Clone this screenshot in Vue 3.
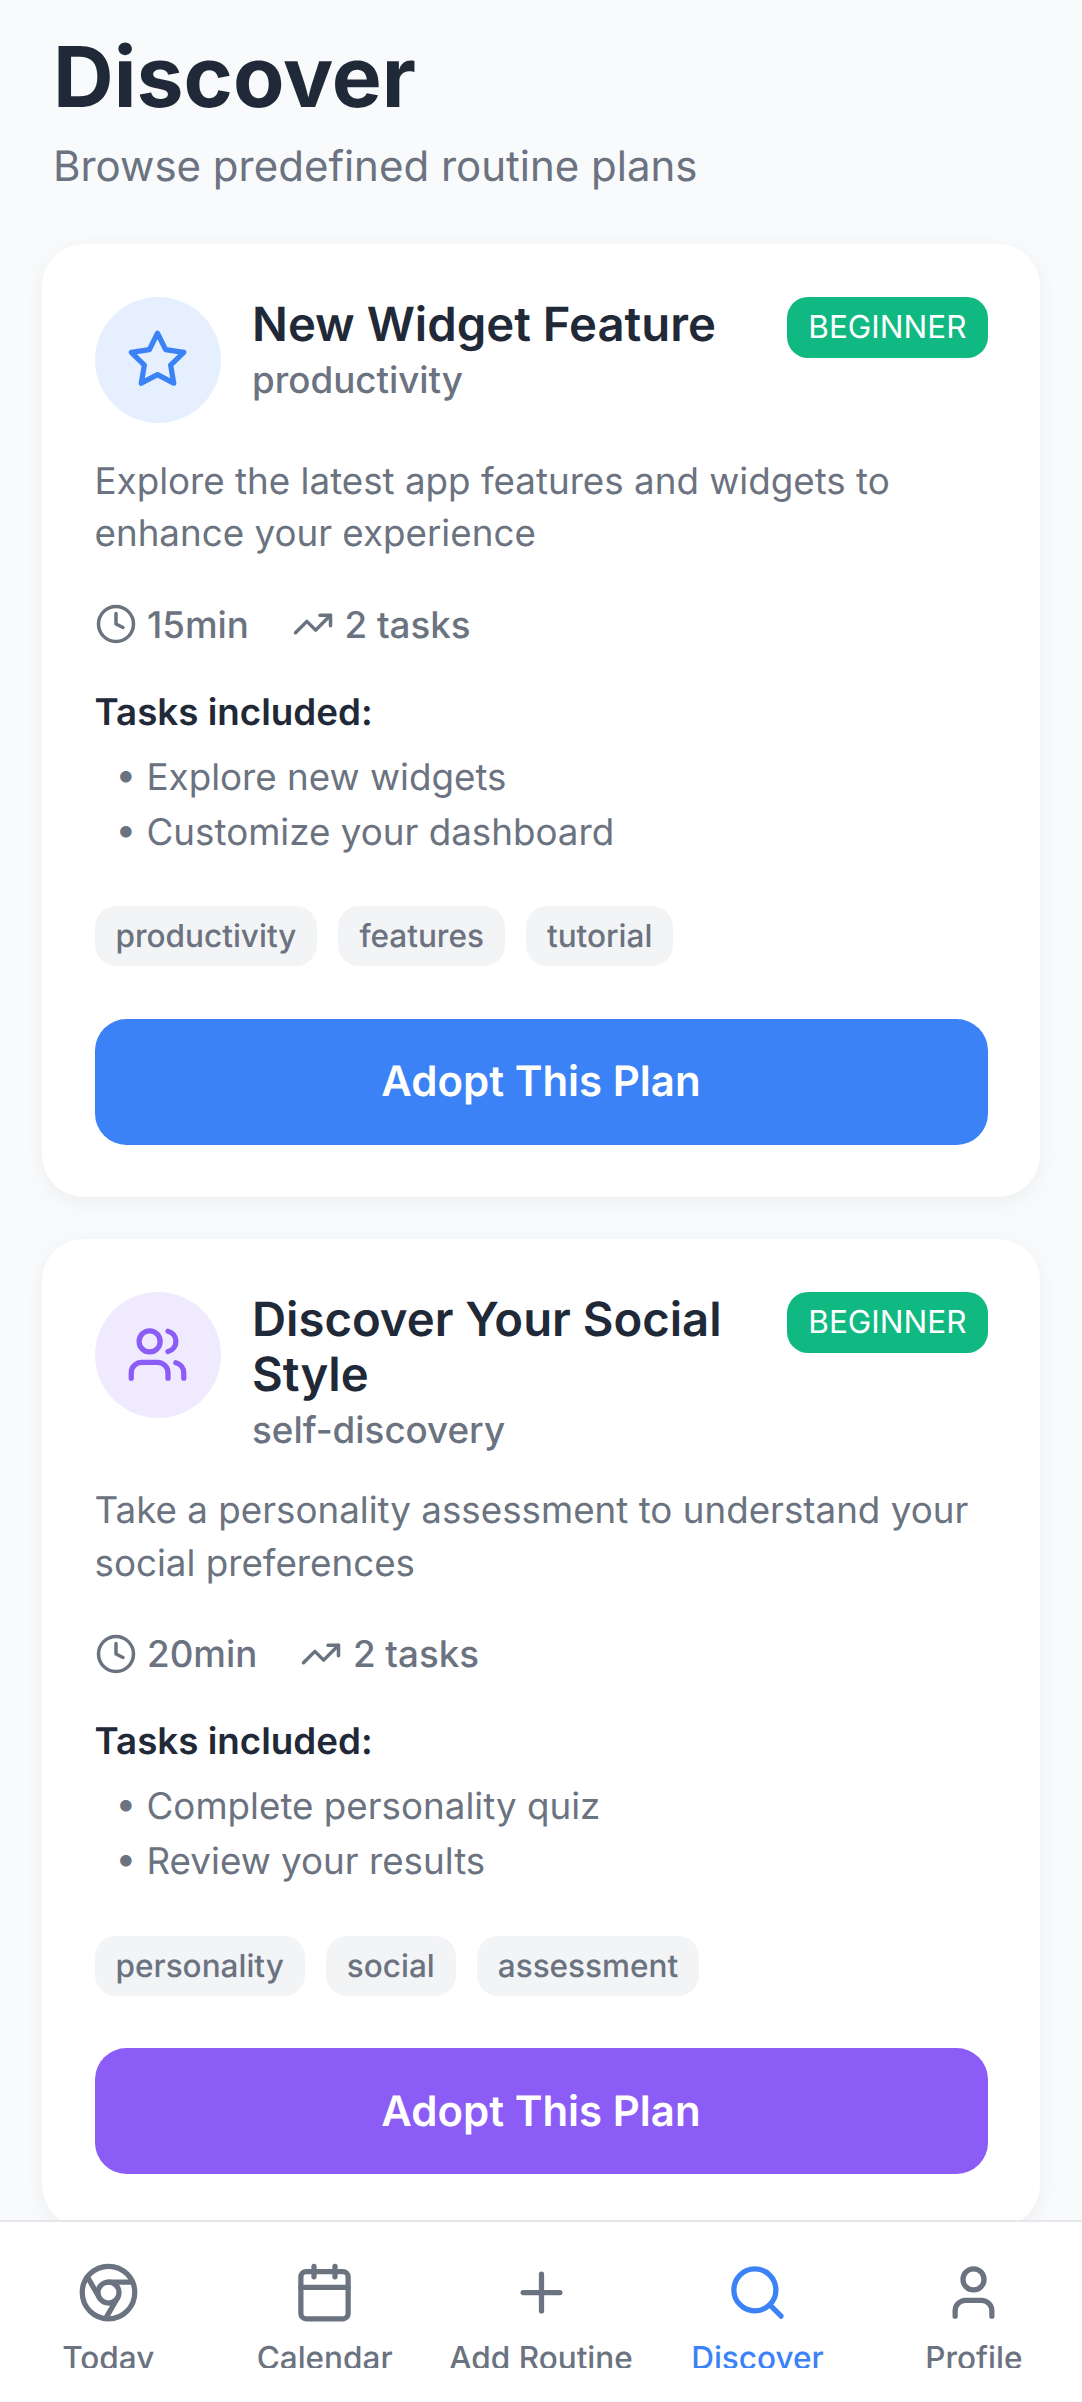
<script setup>
const plans = [
  {
    title: 'New Widget Feature',
    category: 'productivity',
    icon: 'star',
    color: '#3b82f6',
    tint: '#e5effe',
    desc: 'Explore the latest app features and widgets to enhance your experience',
    time: '15min',
    tasks: ['Explore new widgets', 'Customize your dashboard'],
    tags: ['productivity', 'features', 'tutorial']
  },
  {
    title: 'Discover Your Social Style',
    category: 'self-discovery',
    icon: 'users',
    color: '#8b5cf6',
    tint: '#f0eafe',
    desc: 'Take a personality assessment to understand your social preferences',
    time: '20min',
    tasks: ['Complete personality quiz', 'Review your results'],
    tags: ['personality', 'social', 'assessment']
  }
]

const navItems = [
  { label: 'Today', icon: 'chrome' },
  { label: 'Calendar', icon: 'calendar' },
  { label: 'Add Routine', icon: 'plus' },
  { label: 'Discover', icon: 'search', active: true },
  { label: 'Profile', icon: 'user' }
]
</script>

<template>
  <div class="screen">
    <main class="content">
      <header class="header">
        <h1>Discover</h1>
        <p>Browse predefined routine plans</p>
      </header>

      <section v-for="plan in plans" :key="plan.title" class="card">
        <div class="card-top">
          <div class="plan-icon" :style="{ background: plan.tint, color: plan.color }">
            <svg v-if="plan.icon === 'star'" viewBox="0 0 24 24" class="plan-svg">
              <polygon points="12 2 15.09 8.26 22 9.27 17 14.14 18.18 21.02 12 17.77 5.82 21.02 7 14.14 2 9.27 8.91 8.26 12 2" />
            </svg>
            <svg v-else viewBox="0 0 24 24" class="plan-svg">
              <path d="M16 21v-2a4 4 0 0 0-4-4H6a4 4 0 0 0-4 4v2" />
              <circle cx="9" cy="7" r="4" />
              <path d="M22 21v-2a4 4 0 0 0-3-3.87" />
              <path d="M16 3.13a4 4 0 0 1 0 7.75" />
            </svg>
          </div>
          <div class="plan-head">
            <h2>{{ plan.title }}</h2>
            <div class="category">{{ plan.category }}</div>
          </div>
          <span class="level">BEGINNER</span>
        </div>

        <p class="desc">{{ plan.desc }}</p>

        <div class="meta">
          <span class="meta-item">
            <svg viewBox="0 0 24 24" class="meta-svg">
              <circle cx="12" cy="12" r="10" />
              <polyline points="12 6 12 12 16 14" />
            </svg>
            {{ plan.time }}
          </span>
          <span class="meta-item">
            <svg viewBox="0 0 24 24" class="meta-svg">
              <polyline points="22 7 13.5 15.5 8.5 10.5 2 17" />
              <polyline points="16 7 22 7 22 13" />
            </svg>
            {{ plan.tasks.length }} tasks
          </span>
        </div>

        <h3>Tasks included:</h3>
        <div class="task" v-for="task in plan.tasks" :key="task">• {{ task }}</div>

        <div class="tags">
          <span v-for="tag in plan.tags" :key="tag" class="tag">{{ tag }}</span>
        </div>

        <button class="adopt" :style="{ background: plan.color }">Adopt This Plan</button>
      </section>
    </main>

    <nav class="tabbar">
      <div v-for="item in navItems" :key="item.label" class="tab" :class="{ active: item.active }">
        <svg viewBox="0 0 24 24" class="tab-svg">
          <template v-if="item.icon === 'chrome'">
            <circle cx="12" cy="12" r="10" />
            <circle cx="12" cy="12" r="4" />
            <line x1="21.17" y1="8" x2="12" y2="8" />
            <line x1="3.95" y1="6.06" x2="8.54" y2="14" />
            <line x1="10.88" y1="21.94" x2="15.46" y2="14" />
          </template>
          <template v-else-if="item.icon === 'calendar'">
            <path d="M8 2v4" />
            <path d="M16 2v4" />
            <rect x="3" y="4" width="18" height="18" rx="2" />
            <path d="M3 10h18" />
          </template>
          <template v-else-if="item.icon === 'plus'">
            <path d="M5 12h14" />
            <path d="M12 5v14" />
          </template>
          <template v-else-if="item.icon === 'search'">
            <circle cx="11" cy="11" r="8" />
            <path d="m21 21-4.3-4.3" />
          </template>
          <template v-else>
            <path d="M19 21v-2a4 4 0 0 0-4-4H9a4 4 0 0 0-4 4v2" />
            <circle cx="12" cy="7" r="4" />
          </template>
        </svg>
        <div class="tab-label">{{ item.label }}</div>
      </div>
    </nav>
  </div>
</template>

<style>
html,
body {
  margin: 0;
  background: #f9fafb;
}
</style>

<style scoped>
.screen {
  width: 1082px;
  height: 2402px;
  display: flex;
  flex-direction: column;
  overflow: hidden;
  background: #f9fafb;
  font-family: Inter, "Liberation Sans", sans-serif;
  text-rendering: geometricPrecision;
}

.content {
  flex: 1;
  min-height: 0;
  overflow: hidden;
  padding: 0 42px;
}

.header {
  padding: 25px 11px 0;
  margin-bottom: 46px;
}

.header h1 {
  margin: 0;
  font-size: 84px;
  line-height: 105px;
  font-weight: 700;
  color: #1f2937;
}

.header p {
  margin: 5px 0 0;
  font-size: 42px;
  line-height: 63px;
  color: #6b7280;
}

.card {
  background: #fff;
  border-radius: 42px;
  padding: 52.5px;
  margin-bottom: 42px;
  box-shadow: 0 5px 21px rgba(0, 0, 0, 0.05);
}

.card-top {
  display: flex;
  align-items: flex-start;
  margin-bottom: 32px;
}

.plan-icon {
  flex: none;
  width: 126px;
  height: 126px;
  border-radius: 50%;
  display: flex;
  align-items: center;
  justify-content: center;
  margin-right: 31.5px;
}

.plan-svg {
  width: 63px;
  height: 63px;
  fill: none;
  stroke: currentColor;
  stroke-width: 2;
  stroke-linecap: round;
  stroke-linejoin: round;
}

.plan-head {
  flex: 1;
  min-width: 0;
}

.plan-head h2 {
  margin: 0;
  font-size: 47.25px;
  line-height: 55px;
  font-weight: 600;
  color: #1f2937;
}

.category {
  margin-top: 5.5px;
  font-size: 36.75px;
  line-height: 45px;
  font-weight: 500;
  color: #6b7280;
}

.level {
  flex: none;
  background: #10b981;
  color: #fff;
  font-size: 31.5px;
  line-height: 40px;
  font-weight: 400;
  padding: 10.5px 21px;
  border-radius: 21px;
}

.desc {
  margin: 0 0 42px;
  font-size: 36.75px;
  line-height: 52.5px;
  color: #6b7280;
}

.meta {
  display: flex;
  gap: 43px;
  margin-bottom: 42px;
}

.meta-item {
  display: flex;
  align-items: center;
  gap: 10.5px;
  font-size: 36.75px;
  line-height: 45px;
  font-weight: 500;
  color: #6b7280;
}

.meta-svg {
  width: 42px;
  height: 42px;
  fill: none;
  stroke: currentColor;
  stroke-width: 2;
  stroke-linecap: round;
  stroke-linejoin: round;
}

h3 {
  margin: 0 0 15px;
  font-size: 36.75px;
  line-height: 45px;
  font-weight: 600;
  color: #1f2937;
}

.task {
  padding-left: 21px;
  font-size: 36.75px;
  line-height: 55px;
  color: #6b7280;
}

.tags {
  display: flex;
  gap: 21px;
  margin: 47.5px 0 52.5px;
}

.tag {
  background: #f3f4f6;
  border-radius: 21px;
  padding: 8px 21px;
  font-size: 31.5px;
  line-height: 44px;
  font-weight: 500;
  color: #6b7280;
}

.adopt {
  display: block;
  width: 100%;
  height: 126px;
  border: 0;
  border-radius: 31.5px;
  color: #fff;
  font-family: inherit;
  font-size: 42px;
  font-weight: 600;
  text-rendering: geometricPrecision;
}

.tabbar {
  flex: none;
  height: 182px;
  box-sizing: border-box;
  display: flex;
  background: #fff;
  border-top: 2px solid #e5e7eb;
  border-bottom: 1px solid #f6f7f8;
  padding: 39px 0 0;
  overflow: hidden;
}

.tab {
  flex: 1;
  display: flex;
  flex-direction: column;
  align-items: center;
  color: #6b7280;
}

.tab.active {
  color: #3b82f6;
}

.tab-svg {
  width: 63px;
  height: 63px;
  fill: none;
  stroke: currentColor;
  stroke-width: 2;
  stroke-linecap: round;
  stroke-linejoin: round;
}

.tab-label {
  margin-top: 13px;
  height: 31px;
  overflow: hidden;
  font-size: 31.5px;
  line-height: 42px;
  font-weight: 500;
  white-space: nowrap;
}
</style>
